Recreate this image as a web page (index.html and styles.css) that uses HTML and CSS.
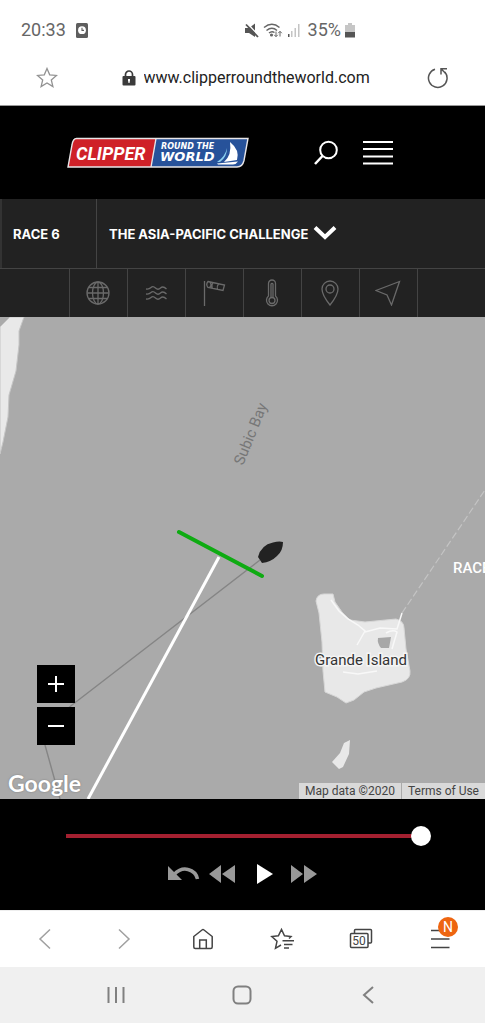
FILE: index.html
```html
<!DOCTYPE html>
<html lang="en">
<head>
<meta charset="utf-8">
<meta name="viewport" content="width=device-width, initial-scale=1">
<title>Clipper Round the World – Race 6</title>
<link rel="stylesheet" href="styles.css">
</head>
<body>
<div class="status">
  <span>20:33</span>
  <svg class="status-clock" width="12" height="15" viewBox="0 0 12 15"><rect width="12" height="15" rx="1.5" fill="#5e5e5e"/><circle cx="6" cy="7.2" r="3.9" fill="#fff"/><path d="M6 4.800v2.600h2" fill="none" stroke="#5e5e5e" stroke-width="1.100"/></svg>
  <div class="status-right">
    <svg width="14" height="15" viewBox="0 0 14 15"><path d="M0 5h4l6-4.500v13.500L4 10H0z" fill="#555"/><path d="M2.500.5l11 12" stroke="#fff" stroke-width="1.500"/><path d="M1 1.500l12 12.500" stroke="#555" stroke-width="1.800"/></svg>
    <svg width="20" height="15" viewBox="0 0 20 15" fill="none" stroke="#666" stroke-width="1.500"><path d="M1 4.500q8-6.500 15.500 0M3.500 7.500q5.500-4.500 10.500 0M6 10q2.800-2.400 5.500-.5"/><circle cx="8.500" cy="12" r=".8" fill="#666"/><path d="M13 8.500v5m-1.800-1.700l1.800 1.900 1.800-1.900M17 13.500v-5m-1.800 1.700L17 8.300l1.800 1.900" stroke-width="1"/></svg>
    <svg width="13" height="15" viewBox="0 0 13 15"><path d="M1 11h1.500v3H1z" fill="#555"/><path d="M4 8h1.500v6H4zM7.500 5H9v9H7.500zM11 1h1.500v13H11z" fill="#c4c4c4"/></svg>
    <span class="battery-text">35%</span>
    <svg width="10" height="15" viewBox="0 0 10 15"><path d="M3 0h4v2h3v7H0V2h3z" fill="#c6c6c6"/><path d="M0 9h10v5.500H0z" fill="#555"/></svg>
  </div>
</div>

<div class="address">
  <button class="plain" aria-label="Bookmark"><svg width="22" height="22" viewBox="0 0 22 22" fill="none" stroke="#929292" stroke-width="1.300"><path d="M11 1.500l2.700 6.300 6.800.6-5.200 4.500 1.600 6.700L11 16l-5.900 3.600 1.600-6.700L1.500 8.400l6.800-.6z"/></svg></button>
  <label class="address-field">
    <svg width="14" height="16" viewBox="0 0 14 16"><path d="M3.500 7V4.500a3.500 3.500 0 0 1 7 0V7" fill="none" stroke="#3b3b3b" stroke-width="1.700"/><rect x=".5" y="6" width="13" height="9.500" rx="1" fill="#3b3b3b"/><path d="M6 9h2v1.500L7.500 13h-1L6 10.500z" fill="#fff"/></svg>
    <input type="text" value="www.clipperroundtheworld.com" aria-label="Address">
  </label>
  <button class="plain" aria-label="Reload"><svg width="22" height="22" viewBox="0 0 22 22" fill="none" stroke="#555" stroke-width="1.500"><path d="M8 2.200A9.300 9.300 0 1 0 17.800 5"/><path d="M14 7.500V1.800h6M14 1.800l5 5"/></svg></button>
</div>

<header class="site-header">
  <a href="#" aria-label="Clipper Round the World">
    <svg class="logo" width="184" height="32" viewBox="0 0 184 32">
      <path d="M10.500 1.500H182l-4 22q-1.500 6.500-7 6.500H2L6 8q1-6.500 4.500-6.500z" fill="#cf2128"/>
      <path d="M90 1.500h92l-4 22q-1.500 6.500-7 6.500H85z" fill="#27529a"/>
      <path d="M10.500 1.500H182l-4 22q-1.500 6.500-7 6.500H2L6 8q1-6.500 4.500-6.500zM90 1.500L85 30" fill="none" stroke="#e8e6e8" stroke-width="1.400"/>
      <text class="logo-main" x="10" y="23">CLIPPER</text>
      <text class="logo-top" x="95" y="12">ROUND THE</text>
      <text class="logo-bottom" x="94" y="24">WORLD</text>
      <path d="M164 5q10 8 7 18l-13 2q8-7 6-20z" fill="#fff"/>
      <path d="M161 11q0 9-7 14h-3q8-5 10-14z" fill="#8bd0ef"/>
      <path d="M151 26.500l21-2q-2 3-5 3h-15z" fill="#fff"/>
    </svg>
  </a>
  <button class="plain search" aria-label="Search"><svg width="26" height="26" viewBox="0 0 26 26" fill="none" stroke="#fff" stroke-width="2"><circle cx="15.500" cy="10" r="8.300"/><path d="M9.500 16L2 24" stroke-width="2.500"/></svg></button>
  <button class="plain" aria-label="Menu"><svg width="30" height="26" viewBox="0 0 30 26" stroke="#fff" stroke-width="2.200"><path d="M0 2h30M0 9h30M0 16.500h30M0 23.500h30"/></svg></button>
</header>

<div class="race">
  <span class="race-number">RACE 6</span>
  <button class="race-name">THE ASIA-PACIFIC CHALLENGE
    <svg width="24" height="20" viewBox="0 0 24 20" fill="none" stroke="#fff" stroke-width="4"><path d="M2 3.500l10 9.500 10-9.500"/></svg>
  </button>
</div>

<div class="tools">
  <span></span>
  <button aria-label="Globe"><svg width="26" height="26" viewBox="0 0 26 26"><circle cx="13" cy="13" r="11"/><ellipse cx="13" cy="13" rx="5.500" ry="11"/><path d="M13 2v22M2 13h22M4 7.500h18M4 18.500h18"/></svg></button>
  <button aria-label="Waves"><svg width="26" height="26" viewBox="0 0 26 26"><path d="M3 9q3 .5 5-1.500t4.500.500 5 0 6 1M3 14q3 .5 5-1.500t4.500.500 5 0 6 1M3 19q3 .5 5-1.500t4.500.500 5 0 6 1"/></svg></button>
  <button aria-label="Wind"><svg width="26" height="26" viewBox="0 0 26 26"><path d="M3.500 1v25M7 1.500L23.500 5l-1.500 5.500L7 7.500Q4.500 4.500 7 1.500zM12 2.700q-2 2.500-.8 5.600M17.500 3.800q-2 2.500-1 5.500M8.500 2q3 2.500 0 5.500"/></svg></button>
  <button aria-label="Temperature"><svg width="26" height="28" viewBox="0 0 26 28"><path d="M9.500 17V4.500a3.500 3.500 0 0 1 7 0V17a5.500 5.500 0 1 1-7 0zM12 18.500V5a1.200 1.200 0 0 1 2 0v13.500"/><circle cx="13" cy="21.500" r="3"/></svg></button>
  <button aria-label="Location"><svg width="26" height="26" viewBox="0 0 26 26"><path d="M13 25Q5 15 5 9a8 8 0 0 1 16 0q0 6-8 16z"/><circle cx="13" cy="9" r="4"/></svg></button>
  <button aria-label="Heading"><svg width="26" height="26" viewBox="0 0 26 26"><path d="M24.500 1.500L1 10.500l11 4.500 4.500 10z"/></svg></button>
  <span></span>
</div>

<main class="map">
  <svg class="map-canvas" viewBox="0 0 485 482" preserveAspectRatio="xMidYMid slice">
    <rect width="485" height="482" fill="#aaa"/>
    <path d="M0 10L10 0h14l-5 14v14l-3 26-7 24-1 22-5 25-3 12z" fill="#e9e9e9" stroke="#c6c6c6"/>
    <path d="M316 284Q317 277 324 277H333L335 285 342 295 350 303 365 305 396 302Q404 304 404 311L406 332 410 354Q411 362 402 365L376 371 364 375 354 383 346 386 337 380 325 375 323 354 322 325 319 296Z" fill="#e8e8e8" stroke="#d7d7d7" stroke-linejoin="round"/>
    <path d="M378 321l13-1q-1 6-2 11h-8q-4-5-3-10z" fill="#a7a7a7"/>
    <path d="M331 283l8 11 9 8 10 6 7 6-8 14M365 315l15-4 17 1 5-16M386 316q7-4 11-1l-5 17M343 355l15 2 19-3" fill="none" stroke="#f8f8f8" stroke-width="1.500"/>
    <path d="M344 426l6-3-1 14-6 13-4 2-7-7 8-9z" fill="#e8e8e8"/>
    <path d="M402 296L485 173" stroke="#c4c4c4" stroke-width="1.200" stroke-dasharray="7 3"/>
    <path d="M260 243L72 388l-30 25 3 15 15 54" fill="none" stroke="#858585" stroke-width="1.400"/>
    <path d="M219 240L88 482" stroke="#fff" stroke-width="3"/>
    <path d="M179 215l83 44" stroke="#0eab12" stroke-width="4" stroke-linecap="round"/>
    <path d="M258 240q3-12 15-14.500 6-1.500 10-.5 0 9-6 14-6 6-15 7z" fill="#222"/>
    <text class="water-label" transform="translate(243 149) rotate(-68)">Subic Bay</text>
    <text class="island-label" x="315" y="348">Grande Island</text>
    <text class="race-label" x="453" y="256">RACE</text>
  </svg>
  <div class="zoom">
    <button aria-label="Zoom in"><svg width="18" height="18" viewBox="0 0 18 18" stroke="#fff" stroke-width="2"><path d="M1 9h16M9 1v16"/></svg></button>
    <button aria-label="Zoom out"><svg width="18" height="18" viewBox="0 0 18 18" stroke="#fff" stroke-width="2"><path d="M1 9h16"/></svg></button>
  </div>
  <span class="google">Google</span>
  <div class="credits"><span>Map data ©2020</span><a href="#">Terms of Use</a></div>
</main>

<section class="player">
  <input type="range" min="0" max="100" value="100" aria-label="Timeline">
  <div class="player-buttons">
    <button class="plain" aria-label="Restart"><svg width="32" height="18" viewBox="0 0 32 18"><path d="M0 1v14h14z" fill="#999"/><path d="M6 9.500Q13 2.500 20 4.500q8 2 9.500 9.500" fill="none" stroke="#999" stroke-width="3.500"/></svg></button>
    <button class="plain" aria-label="Rewind"><svg width="26" height="18" viewBox="0 0 26 18" fill="#999"><path d="M12 0v18L0 9zM26 0v18L13 9z"/></svg></button>
    <button class="plain play" aria-label="Play"><svg width="16" height="20" viewBox="0 0 16 20" fill="#fff"><path d="M0 0l16 10L0 20z"/></svg></button>
    <button class="plain" aria-label="Fast forward"><svg width="26" height="18" viewBox="0 0 26 18" fill="#999"><path d="M0 0l12 9-12 9zM13 0l13 9-13 9z"/></svg></button>
  </div>
</section>

<nav class="browser-nav" aria-label="Browser">
  <button class="faded" aria-label="Back"><svg width="24" height="24" viewBox="0 0 24 24"><path d="M17 2.500L7 12l10 9.500"/></svg></button>
  <button class="faded" aria-label="Forward"><svg width="24" height="24" viewBox="0 0 24 24"><path d="M7 2.500L17 12 7 21.500"/></svg></button>
  <button aria-label="Home"><svg width="24" height="24" viewBox="0 0 24 24"><path d="M2.800 9.500L11 3q1-.8 2 0l8.200 6.500V20q0 1.500-1.500 1.500H4.300q-1.500 0-1.500-1.500z"/><path d="M8.700 21v-8h6.600v8"/></svg></button>
  <button aria-label="Bookmarks"><svg width="24" height="24" viewBox="0 0 24 24"><path d="M11 18l-5.500 3.300 1.500-7L1.800 9.500l6.600-.7L11.500 2.500l3 6.300 6.500.7-2 2M12.500 13.700H24M14 17.500h8.500M14 21h5"/></svg></button>
  <button aria-label="Tabs"><svg width="24" height="24" viewBox="0 0 24 24"><path d="M5.500 6V3.500q0-1 1-1h15q1 0 1 1V15q0 1-1 1H19"/><rect x="1.500" y="6.500" width="17.500" height="14" rx="1"/><text class="tab-count" x="10" y="18">50</text></svg></button>
  <button class="menu" aria-label="Menu"><svg width="24" height="24" viewBox="0 0 24 24"><path d="M3 3.500h18M3 12h18.500M3 20.500h18.500"/></svg><span class="badge">N</span></button>
</nav>

<nav class="system-nav" aria-label="System">
  <button aria-label="Recents"><svg width="24" height="24" viewBox="0 0 24 24"><path d="M4.500 4v16M12 4v16M19.500 4v16"/></svg></button>
  <button aria-label="Home screen"><svg width="24" height="24" viewBox="0 0 24 24"><rect x="3.500" y="3.500" width="17" height="17" rx="4.500"/></svg></button>
  <button aria-label="Back"><svg width="24" height="24" viewBox="0 0 24 24"><path d="M16 4l-9 8 9 8"/></svg></button>
</nav>
</body>
</html>
```
FILE: styles.css
```css
* {
  box-sizing: border-box;
}

body {
  margin: 0;
  min-height: 100vh;
  display: flex;
  flex-direction: column;
  background: #fff;
  font-family: Roboto, sans-serif;
}

svg {
  display: block;
  flex: none;
}

button {
  display: flex;
  align-items: center;
  justify-content: center;
  padding: 0;
  border: 0;
  background: none;
  color: inherit;
  font: inherit;
}

.status {
  display: flex;
  align-items: center;
  gap: 10px;
  padding: 19px 130px 9px 21px;
  color: #666;
  font-size: 18px;
  line-height: 22px;
}

.status-right {
  display: flex;
  align-items: center;
  gap: 4px;
  margin-left: auto;
}

.battery-text {
  margin-left: 4px;
}

.address {
  display: flex;
  align-items: center;
  justify-content: space-between;
  height: 56px;
  padding: 0 36px;
  border-bottom: 1px solid #999;
}

.address-field {
  display: flex;
  align-items: center;
  gap: 8px;
  margin-left: 8px;
}

.address-field input {
  width: 228px;
  padding: 0;
  border: 0;
  background: none;
  color: #222;
  font: 16px/24px Roboto, sans-serif;
}

.site-header {
  display: flex;
  align-items: center;
  padding: 30px 66px;
  min-height: 93px;
  background: #000;
}

.search {
  margin: 0 24px 0 63px;
}

.logo text {
  fill: #fff;
  font-style: italic;
}

.logo .logo-main {
  font-family: Roboto, sans-serif;
  font-size: 18px;
  font-weight: 700;
}

.logo .logo-top {
  font-family: "DejaVu Sans", sans-serif;
  font-size: 8px;
  font-weight: 700;
}

.logo .logo-bottom {
  font-family: "DejaVu Sans", sans-serif;
  font-size: 13px;
  font-weight: 700;
}

.race {
  display: flex;
  height: 69px;
  border-left: 2px solid #333;
  background: #222;
  color: #fff;
  font: 700 13px/20px Inter, sans-serif;
}

.race-number {
  display: flex;
  align-items: center;
  width: 95px;
  padding-left: 11px;
  border-right: 1px solid #444;
}

.race-name {
  flex: 1;
  justify-content: flex-start;
  gap: 5px;
  padding-left: 12px;
}

.tools {
  display: grid;
  grid-template-columns: 1fr repeat(6, 58px) 1fr;
  height: 49px;
  border-top: 1px solid #444;
  background: #222;
}

.tools > * + * {
  border-left: 1px solid #444;
}

.tools svg {
  fill: none;
  stroke: #6a6a6a;
  stroke-width: 1.3;
}

.map {
  position: relative;
  flex: 1;
  min-height: 300px;
  overflow: hidden;
  background: #aaa;
}

.map-canvas {
  position: absolute;
  inset: 0;
  width: 100%;
  height: 100%;
}

.water-label {
  fill: #777;
  font-size: 15px;
}

.island-label {
  fill: #333;
  stroke: #f4f4f4;
  stroke-width: 3px;
  paint-order: stroke;
  font-size: 15px;
}

.race-label {
  fill: #fff;
  font-size: 15px;
  font-weight: 500;
}

.zoom {
  position: absolute;
  left: 37px;
  bottom: 54px;
  display: grid;
  gap: 4px;
}

.zoom button {
  width: 38px;
  height: 38px;
  background: #000;
}

.google {
  position: absolute;
  left: 8px;
  bottom: 2px;
  color: #fff;
  font: 700 23px/28px Lato, sans-serif;
  text-shadow: 0 0 2px #777;
}

.credits {
  position: absolute;
  right: 0;
  bottom: 0;
  display: flex;
  background: #d9d9d9;
  color: #444;
  font-size: 12px;
  line-height: 16px;
}

.credits > * {
  padding: 0 6px;
}

.credits a {
  border-left: 1px solid #aaa;
  color: inherit;
  text-decoration: none;
}

.player {
  padding: 27px 54px 26px 66px;
  background: #000;
}

.player input {
  display: block;
  width: 100%;
  height: 20px;
  margin: 0;
  appearance: none;
  background: linear-gradient(#a32030, #a32030) left center / calc(100% - 10px) 4px no-repeat;
}

.player input::-webkit-slider-thumb {
  appearance: none;
  width: 20px;
  height: 20px;
  border-radius: 50%;
  background: #fff;
}

.player-buttons {
  display: flex;
  align-items: center;
  justify-content: center;
  gap: 9px;
  margin-top: 18px;
  padding-right: 12px;
}

.play {
  margin: 0 9px 0 13px;
}

.browser-nav {
  display: grid;
  grid-template-columns: repeat(6, 1fr);
  height: 57px;
  padding: 0 6px;
  border-top: 1px solid #eee;
}

.browser-nav svg {
  fill: none;
  stroke: #444;
  stroke-width: 1.5;
}

.browser-nav .faded svg {
  stroke: #a0a0a0;
}

.browser-nav .tab-count {
  fill: #444;
  stroke: none;
  font-size: 12px;
  text-anchor: middle;
}

.menu {
  position: relative;
}

.badge {
  position: absolute;
  right: 21px;
  top: 6px;
  width: 20px;
  border-radius: 10px;
  background: #ee6510;
  color: #fff;
  font-size: 14px;
  line-height: 20px;
  text-align: center;
}

.system-nav {
  display: grid;
  grid-template-columns: repeat(3, 1fr);
  height: 56px;
  padding: 0 53px;
  background: #f0f0f0;
}

.system-nav svg {
  fill: none;
  stroke: #808080;
  stroke-width: 2;
}
```
